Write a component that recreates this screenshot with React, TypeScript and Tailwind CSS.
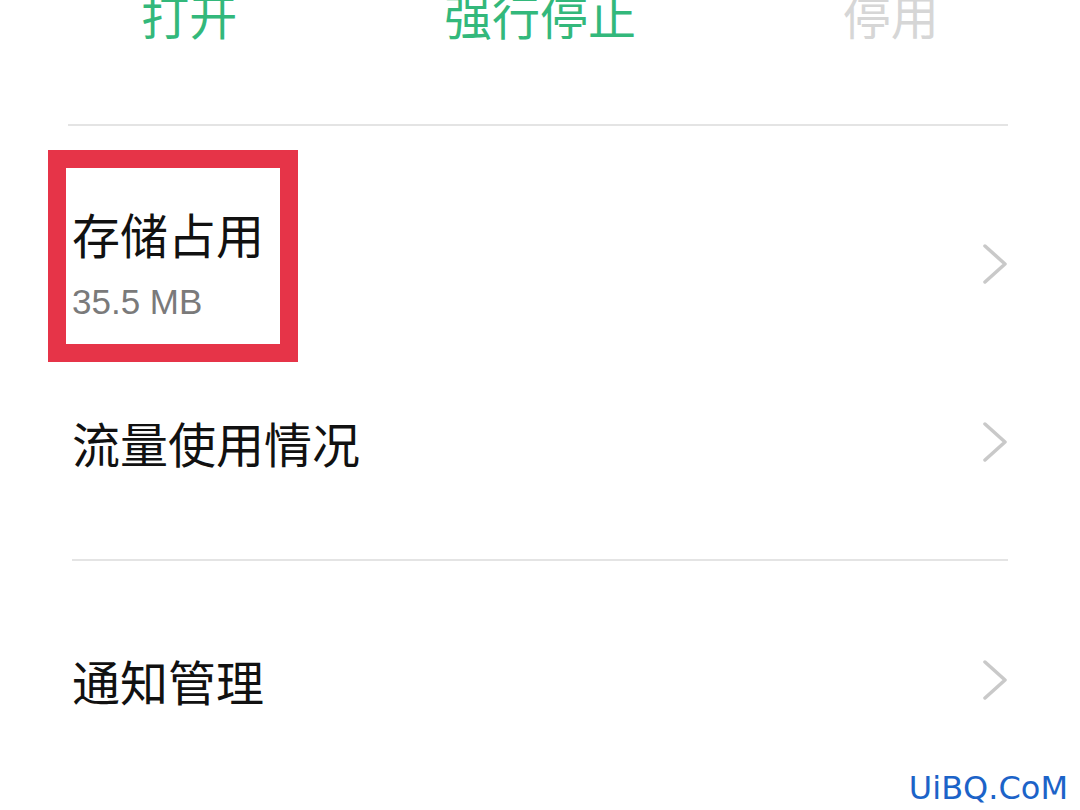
import React from "react";

const cjk = { fontFamily: '"Noto Sans CJK SC", "Noto Sans", sans-serif' };

function Chevron() {
  return (
    <svg width="26" height="40" viewBox="0 0 26 40" fill="none">
      <polyline
        points="3,2 23,20 3,38"
        stroke="#c9c9c9"
        strokeWidth="3.5"
        strokeLinecap="round"
        strokeLinejoin="round"
      />
    </svg>
  );
}

export default function App() {
  return (
    <div className="relative w-[1080px] h-[810px] overflow-hidden bg-white" style={cjk}>
      {/* action header */}
      <div className="grid grid-cols-3 h-[124px] pl-[14px] pr-[14px]">
        <div className="flex justify-center">
          <span className="text-[48px] leading-none mt-[-10px] text-[#33b87b]">打开</span>
        </div>
        <div className="flex justify-center">
          <span className="text-[48px] leading-none mt-[-10px] text-[#33b87b]">强行停止</span>
        </div>
        <div className="flex justify-center">
          <span className="text-[48px] leading-none mt-[-10px] text-[#d6d6d6]">停用</span>
        </div>
      </div>
      <div className="ml-[68px] mr-[72px] h-[2px] bg-[#e4e4e4]" />

      {/* storage */}
      <div className="h-[276px] flex items-center justify-between pl-[72px] pr-[72px]">
        <div className="flex flex-col">
          <span className="text-[48px] leading-none text-[#111111]">存储占用</span>
          <span
            className="text-[35px] leading-none mt-[27px] text-[#7a7a7a]"
            style={{ fontFamily: '"Liberation Sans", Arial, sans-serif' }}
          >
            35.5 MB
          </span>
        </div>
        <Chevron />
      </div>

      {/* data usage */}
      <div className="h-[80px] flex items-center justify-between pl-[72px] pr-[72px]">
        <span className="text-[48px] leading-none text-[#111111]">流量使用情况</span>
        <Chevron />
      </div>

      <div className="mt-[77px] ml-[72px] mr-[72px] h-[2px] bg-[#e4e4e4]" />

      {/* notifications */}
      <div className="h-[238px] flex items-center justify-between pl-[72px] pr-[72px]">
        <span className="text-[48px] leading-none text-[#111111]">通知管理</span>
        <Chevron />
      </div>

      {/* red annotation box */}
      <div className="absolute left-[48px] top-[150px] w-[250px] h-[212px] border-[18px] border-[#e63448]" />

      {/* watermark */}
      <div
        className="absolute right-[12px] bottom-[6px] text-[32px] leading-none text-[#1c63c8]"
        style={{ fontFamily: '"DejaVu Sans", Verdana, sans-serif' }}
      >
        UiBQ.CoM
      </div>
    </div>
  );
}
